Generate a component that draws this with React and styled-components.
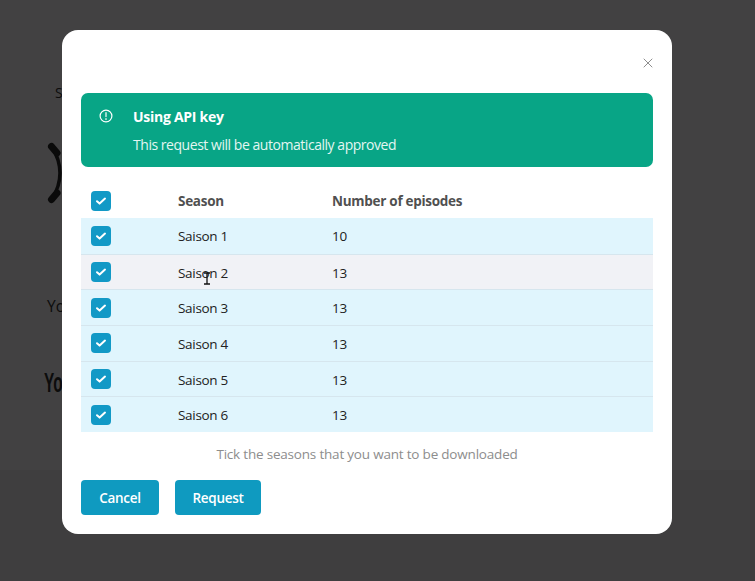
import React from "react";
import styled, { createGlobalStyle } from "styled-components";
import { X } from "lucide-react";

const Global = createGlobalStyle`
  html, body { margin: 0; padding: 0; width: 755px; height: 581px; overflow: hidden; background: #424142; }
  body { font-family: "Open Sans", "Noto Sans", sans-serif; }
  * { box-sizing: border-box; }
`;

const Page = styled.div`
  width: 755px;
  height: 581px;
  background: #424142;
  display: flex;
  flex-direction: column;
`;
const PageMain = styled.div`
  height: 470px;
  padding: 84px 0 0 44px;
  display: flex;
  flex-direction: column;
  align-items: flex-start;
  color: #0c0c0c;
`;
const PageFoot = styled.div`
  flex: 1;
  background: #3f3e3f;
`;
const BgLabel = styled.div`
  font-size: ${(p) => p.$size}px;
  font-weight: 500;
  line-height: 18px;
  margin-left: ${(p) => p.$indent}px;
  margin-top: ${(p) => p.$top}px;
`;
const BgRing = styled.svg`
  display: block;
  margin-top: 40px;
  margin-left: 3px;
  width: 24px;
  height: 64px;
`;
const BgTitle = styled.div`
  font-family: "Liberation Sans", sans-serif;
  font-weight: 700;
  font-size: 28px;
  line-height: 28px;
  margin-top: 54px;
  transform: scaleX(0.55);
  transform-origin: left center;
`;

const Modal = styled.div`
  position: absolute;
  left: 62px;
  top: 30px;
  width: 610px;
  height: 504px;
  background: #fff;
  border-radius: 16px;
  padding: 63px 19px 0;
  display: flex;
  flex-direction: column;
`;
const CloseButton = styled.button`
  position: absolute;
  top: 25px;
  right: 16px;
  width: 16px;
  height: 16px;
  padding: 0;
  border: 0;
  background: none;
  color: #858585;
  display: flex;
`;
const Alert = styled.div`
  height: 74px;
  background: #08a586;
  border-radius: 7px;
  color: #fff;
  padding: 14px 18px;
  display: flex;
  gap: 20px;
`;
const AlertIcon = styled.svg`
  width: 14px;
  height: 14px;
  margin-top: 2px;
  flex: none;
`;
const AlertBody = styled.div`
  display: flex;
  flex-direction: column;
  gap: 8px;
`;
const AlertTitle = styled.div`
  font-size: 14px;
  line-height: 20px;
  font-weight: 700;
  letter-spacing: -0.28px;
`;
const AlertText = styled.div`
  font-size: 14px;
  line-height: 20px;
  color: #e3f6f2;
  letter-spacing: -0.46px;
`;
const Table = styled.div`
  margin-top: 16px;
  display: flex;
  flex-direction: column;
`;
const Row = styled.div`
  display: grid;
  grid-template-columns: 87px 154px 1fr;
  align-items: center;
  padding-left: 10px;
  height: ${(p) => (p.$head ? 35 : 35.7)}px;
  background: ${(p) => (p.$head ? "transparent" : p.$hover ? "#f1f2f6" : "#e0f5fd")};
  border-top: ${(p) => (p.$head || p.$first ? "0" : "1px solid #d6e6ee")};
`;
const HeadCell = styled.div`
  font-size: 13.5px;
  font-weight: 700;
  color: #505050;
  letter-spacing: -0.28px;
`;
const Cell = styled.div`
  font-size: 13.5px;
  color: #222;
  letter-spacing: -0.3px;
  padding-top: 1px;
  position: relative;
`;
const Check = styled.span`
  width: 20px;
  height: 20px;
  border-radius: 4px;
  background: #1299c6;
  display: flex;
  align-items: center;
  justify-content: center;
`;
const Cursor = styled.svg`
  position: absolute;
  left: 24px;
  top: 9px;
  width: 10px;
  height: 13px;
`;
const Hint = styled.div`
  margin-top: 12px;
  text-align: center;
  font-size: 13.5px;
  line-height: 20px;
  color: #8d8d8d;
  letter-spacing: -0.2px;
`;
const Actions = styled.div`
  margin-top: 16px;
  display: flex;
  gap: 16px;
`;
const Button = styled.button`
  width: ${(p) => p.$w}px;
  height: 35px;
  border: 0;
  border-radius: 4px;
  background: #0f9ac0;
  color: #fff;
  font-family: inherit;
  font-size: 13.5px;
  font-weight: 600;
  letter-spacing: -0.3px;
  padding: 0;
`;

const Tick = () => (
  <Check>
    <svg width="12" height="10" viewBox="0 0 12 10" fill="none">
      <path d="M2 5.2 4.6 7.6 10 2.6" stroke="#fff" strokeWidth="2" strokeLinecap="round" strokeLinejoin="round" />
    </svg>
  </Check>
);

const seasons = [
  ["Saison 1", 10],
  ["Saison 2", 13],
  ["Saison 3", 13],
  ["Saison 4", 13],
  ["Saison 5", 13],
  ["Saison 6", 13],
];

export default function App() {
  return (
    <>
      <Global />
      <Page>
        <PageMain>
          <BgLabel $indent={11} $top={0} $size={14}>S</BgLabel>
          <BgRing viewBox="0 0 24 64" fill="none" stroke="#0a0a0a">
            <path d="M5 5 Q21 31 5 57" strokeWidth="3.5" />
            <path d="M4.5 4.5 10 11M4.5 57.5 10 51" strokeWidth="7" strokeLinecap="round" />
          </BgRing>
          <BgLabel $indent={3} $top={91} $size={15.5}>Yo</BgLabel>
          <BgTitle>Yo</BgTitle>
        </PageMain>
        <PageFoot />
      </Page>
      <Modal>
        <CloseButton aria-label="Close">
          <X size={16} strokeWidth={1.4} />
        </CloseButton>
        <Alert>
          <AlertIcon viewBox="0 0 14 14" fill="none" stroke="#fff" strokeWidth="1.2">
            <circle cx="7" cy="7" r="5.9" />
            <path d="M7 3.6v4M7 9.6v.8" strokeLinecap="round" />
          </AlertIcon>
          <AlertBody>
            <AlertTitle>Using API key</AlertTitle>
            <AlertText>This request will be automatically approved</AlertText>
          </AlertBody>
        </Alert>
        <Table>
          <Row $head>
            <Tick />
            <HeadCell>Season</HeadCell>
            <HeadCell>Number of episodes</HeadCell>
          </Row>
          {seasons.map(([name, count], i) => (
            <Row key={name} $first={i === 0} $hover={i === 1}>
              <Tick />
              <Cell>
                {name}
                {i === 1 && (
                  <Cursor viewBox="0 0 10 13" fill="none" stroke="#111" strokeWidth="1.3">
                    <path d="M2 1h6M5 1v11M2 12h6" />
                  </Cursor>
                )}
              </Cell>
              <Cell>{count}</Cell>
            </Row>
          ))}
        </Table>
        <Hint>Tick the seasons that you want to be downloaded</Hint>
        <Actions>
          <Button $w={78}>Cancel</Button>
          <Button $w={86}>Request</Button>
        </Actions>
      </Modal>
    </>
  );
}
